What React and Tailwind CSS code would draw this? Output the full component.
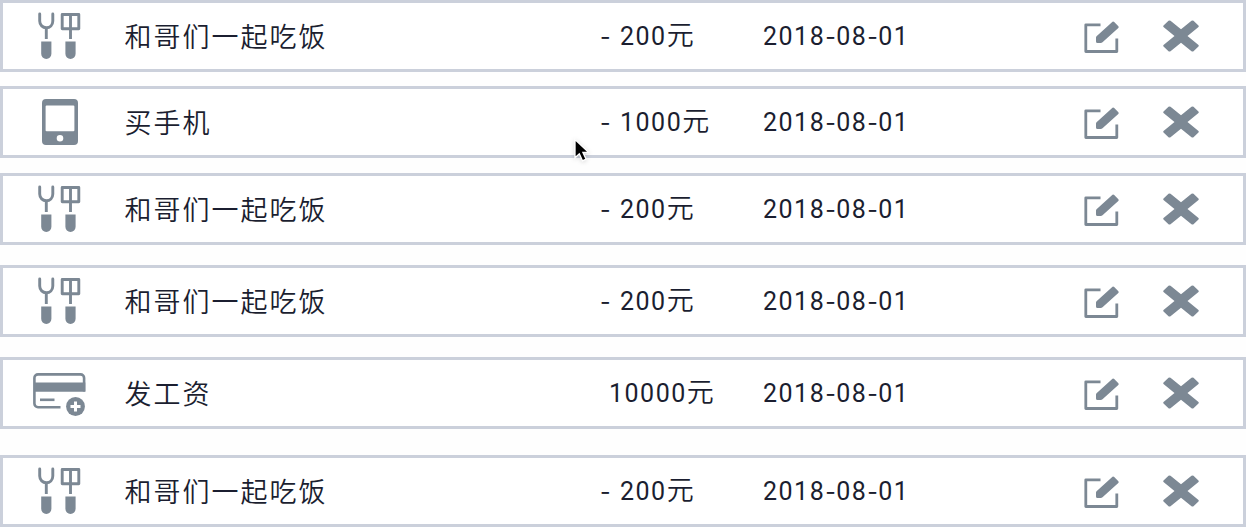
const CJK = "font-['Noto_Sans_CJK_SC_DemiLight','Noto_Sans_CJK_SC',sans-serif] font-[350] text-[27px] tracking-[2px]";
const NUM = "font-['Roboto','Noto_Sans_CJK_SC',sans-serif] font-normal text-[25px] tracking-[1.5px]";

function UtensilsIcon() {
  return (
    <svg className="h-12 w-[44px]" viewBox="0 0 44 48" fill="none" stroke="currentColor" strokeWidth="2.9">
      <path d="M2.7 2v7c0 4 3 6.700 6.600 6.700S15.800 13 15.800 9V2" strokeLinecap="round" />
      <path d="M9.300 15.700V27" />
      <path d="M25.200 2.500h16.600v14.300H25.200zM33.500 2.500V27" strokeLinejoin="round" />
      <path d="M4.200 29.500h10.200v12.300a5.100 5.100 0 0 1-10.200 0zM28.400 29.500h10.200v12.300a5.100 5.100 0 0 1-10.200 0z" fill="currentColor" stroke="none" />
    </svg>
  );
}

function PhoneIcon() {
  return (
    <svg className="ml-px h-12 w-[36px]" viewBox="0 0 36 48">
      <path
        d="M4 1h28a4 4 0 0 1 4 4v38a4 4 0 0 1-4 4H4a4 4 0 0 1-4-4V5a4 4 0 0 1 4-4zM3.600 8.500v23.800a1 1 0 0 0 1 1h26.800a1 1 0 0 0 1-1V8.500a1 1 0 0 0-1-1H4.600a1 1 0 0 0-1 1zM18 37a3.300 3.300 0 1 0 0 6.600a3.300 3.300 0 0 0 0-6.600z"
        fill="currentColor"
        fillRule="evenodd"
      />
    </svg>
  );
}

function CardIcon() {
  return (
    <svg className="mt-[2px] ml-px h-[43px] w-[53px]" viewBox="0 0 53 43" fill="none" stroke="currentColor" strokeWidth="2.6">
      <path d="M27.500 34.200H5a3.600 3.600 0 0 1-3.600-3.600V5A3.600 3.600 0 0 1 5 1.400h42.500A3.600 3.600 0 0 1 51.100 5v13.500" />
      <path d="M1.500 9.500h50.800v9.300H1.500z" fill="currentColor" stroke="none" />
      <path d="M7 26.800h14.500" />
      <circle cx="42.500" cy="33.500" r="9.400" fill="currentColor" stroke="none" />
      <path d="M42.500 28.500v10M37.500 33.500h10" stroke="white" strokeWidth="3" />
    </svg>
  );
}

function EditIcon() {
  return (
    <svg className="h-[33px] w-[36px]" viewBox="0 0 36 33" fill="none" stroke="currentColor" strokeWidth="2.800">
      <path d="M16.500 3.800H1.800v26.700h31V17.500" strokeLinejoin="round" />
      <path d="M28.500.8q.9-.6 1.700.2l4.200 4.300q.7.900-.1 1.700L18.500 21.200q-.8.700-1.800.7h-3.200q-1.500 0-1.500-1.500v-3.800q0-1 .8-1.700z" fill="currentColor" stroke="none" />
    </svg>
  );
}

function CloseIcon() {
  return (
    <svg className="h-8 w-9" viewBox="0 0 36 32">
      <path
        d="M5.500.8q1-.8 2 0L18 9.200 28.500.8q1-.8 2 0l4.700 4.400q1.200 1 0 2L24.500 16l10.700 8.800q1.200 1 0 2l-4.700 4.400q-1 .8-2 0L18 22.800 7.500 31.200q-1 .8-2 0L.8 26.800q-1.200-1 0-2L11.500 16 .8 7.200q-1.200-1 0-2z"
        fill="currentColor"
      />
    </svg>
  );
}

const ICONS = { meal: UtensilsIcon, phone: PhoneIcon, salary: CardIcon };

const ROWS = [
  { icon: "meal", title: "和哥们一起吃饭", sign: "-", amount: "200", gap: "mt-0" },
  { icon: "phone", title: "买手机", sign: "-", amount: "1000", gap: "mt-[14px]" },
  { icon: "meal", title: "和哥们一起吃饭", sign: "-", amount: "200", gap: "mt-[15px]" },
  { icon: "meal", title: "和哥们一起吃饭", sign: "-", amount: "200", gap: "mt-5" },
  { icon: "salary", title: "发工资", sign: "", amount: "10000", gap: "mt-5" },
  { icon: "meal", title: "和哥们一起吃饭", sign: "-", amount: "200", gap: "mt-[26px]" },
];

function Dash() {
  return <span className="inline-block w-[11px] font-['Inter',sans-serif] text-[23px] tracking-normal">-</span>;
}

function Row({ icon, title, sign, amount, gap }) {
  const Icon = ICONS[icon];
  return (
    <li className={`flex h-[72px] items-center border-[3px] border-[#cbd0db] bg-white whitespace-nowrap text-[#1b1e30] ${gap}`}>
      <div className="flex w-[112px] shrink-0 justify-center text-[#7c8894]">
        <Icon />
      </div>
      <div className={`w-[485px] shrink-0 pb-px pl-[9.5px] leading-[40px] ${CJK}`}>{title}</div>
      <div className={`flex w-[163px] shrink-0 items-baseline pb-px leading-[40px] ${NUM}`}>
        <span className={sign ? "w-[20px]" : "w-[9px]"}>{sign && <Dash />}</span>
        <span>{amount}</span>
        <span className={CJK}>元</span>
      </div>
      <div className={`w-[320.5px] shrink-0 pt-[2px] leading-[40px] ${NUM}`}>
        2018<Dash />08<Dash />01
      </div>
      <div className="flex items-center gap-[43px] text-[#7c8894]">
        <button className="pt-[3px]"><EditIcon /></button>
        <button><CloseIcon /></button>
      </div>
    </li>
  );
}

export default function App() {
  return (
    <main className="relative h-[527px] overflow-hidden bg-[#fefefe]">
      <ul>
        {ROWS.map((row, i) => (
          <Row key={i} {...row} />
        ))}
      </ul>
      <svg className="absolute top-[138px] left-[574px] h-6 w-4 drop-shadow-sm" viewBox="0 0 16 24">
        <path d="M1 1.500v18.300l4.300-4 3.200 7 3.600-1.600-3.200-6.800h5.600z" fill="black" stroke="white" strokeWidth="1.300" />
      </svg>
    </main>
  );
}
